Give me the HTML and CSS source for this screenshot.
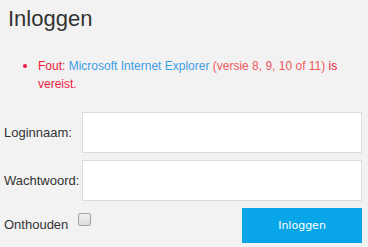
FILE: index.html
```html
<!DOCTYPE html>
<html>
<head>
<meta charset="utf-8">
<link rel="stylesheet" href="styles.css">
</head>
<body>
<div class="page">
  <h1 class="title">Inloggen</h1>
  <ul class="errors">
    <li><span>Fout:</span> <a class="link" href="#">Microsoft Internet Explorer</a> <span class="ver">(versie 8, 9, 10 of 11)</span> <span>is</span> <span>vereist.</span></li>
  </ul>
  <form class="form">
    <div class="row">
      <label class="label">Loginnaam:</label>
      <input class="field" type="text">
    </div>
    <div class="row">
      <label class="label">Wachtwoord:</label>
      <input class="field" type="password">
    </div>
    <div class="row last">
      <label class="remember">Onthouden</label>
      <input class="check" type="checkbox">
      <button class="btn" type="button">Inloggen</button>
    </div>
  </form>
</div>
</body>
</html>
```
FILE: styles.css
```css
html, body {
  margin: 0;
  padding: 0;
  background: #f2f2f2;
}
body {
  font-family: "Liberation Sans", Arial, sans-serif;
  font-size: 13px;
  color: #333;
}
.page {
  padding: 5px 6px 0 4px;
}
.title {
  margin: 0 0 0 4px;
  font-size: 22px;
  line-height: 28px;
  font-weight: normal;
  color: #333;
}
.errors {
  margin: 23px 0 0 0;
  padding: 0 0 0 34px;
  font-size: 12px;
  line-height: 18px;
  color: #ee1b3e;
}
.errors li::marker {
  font-size: 14px;
}
.link {
  color: #3d9de4;
  text-decoration: none;
}
.ver {
  color: #f2595e;
}
.form {
  margin-top: 19px;
  display: flex;
  flex-direction: column;
  gap: 7px;
}
.row {
  display: flex;
  align-items: center;
}
.label {
  width: 78px;
  flex: none;
}
.field {
  flex: 1;
  height: 41px;
  box-sizing: border-box;
  margin: 0;
  border: 1px solid #dcdcdc;
  background: #fff;
  outline: none;
}
.row.last {
  align-items: flex-start;
}
.remember {
  width: 74px;
  flex: none;
  padding-top: 8px;
  line-height: 18px;
}
.check {
  appearance: none;
  -webkit-appearance: none;
  box-sizing: border-box;
  margin: 5px 0 0 0;
  width: 13px;
  height: 13px;
  border: 1px solid #a3a3a3;
  border-radius: 2px;
  background: linear-gradient(#f0f0f0, #dcdcdc);
}
.btn {
  margin-left: auto;
  width: 120px;
  height: 35px;
  border: none;
  background: #08a5e8;
  color: #fff;
  font-family: "DejaVu Sans", Verdana, sans-serif;
  font-size: 11px;
  padding: 0;
}
```
